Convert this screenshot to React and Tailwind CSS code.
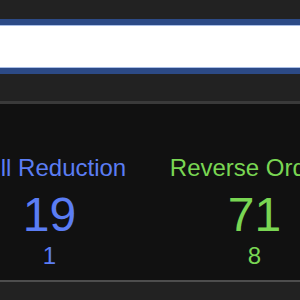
export default function App() {
  return (
    <div className="w-[300px] h-[300px] overflow-hidden bg-[#222222] font-['Liberation_Sans',Arial,sans-serif]">
      <div className="pt-[25px] -mx-[10px]">
        <div className="h-[43px] bg-white border border-[#a9bee6] shadow-[0_0_0_6px_#2c4a86]"></div>
      </div>
      <div className="mt-[33px] border-t-[3px] border-[#3a3a3a] border-b-[2px] border-b-[#4e4e4e] bg-[#111111] h-[181px] pt-[50px]">
        <div className="flex ml-[-53px]">
          <div className="w-[205px] shrink-0 flex flex-col items-center text-[#5b7df4]">
            <div className="text-[24px] leading-[28px] whitespace-nowrap">Full Reduction</div>
            <div className="mt-[9px] text-[48px] leading-[48px]">19</div>
            <div className="mt-[3px] text-[24px] leading-[28px]">1</div>
          </div>
          <div className="w-[205px] shrink-0 flex flex-col items-center text-[#79d653]">
            <div className="text-[24px] leading-[28px] whitespace-nowrap">Reverse Orders</div>
            <div className="mt-[9px] text-[48px] leading-[48px]">71</div>
            <div className="mt-[3px] text-[24px] leading-[28px]">8</div>
          </div>
        </div>
      </div>
    </div>
  );
}
